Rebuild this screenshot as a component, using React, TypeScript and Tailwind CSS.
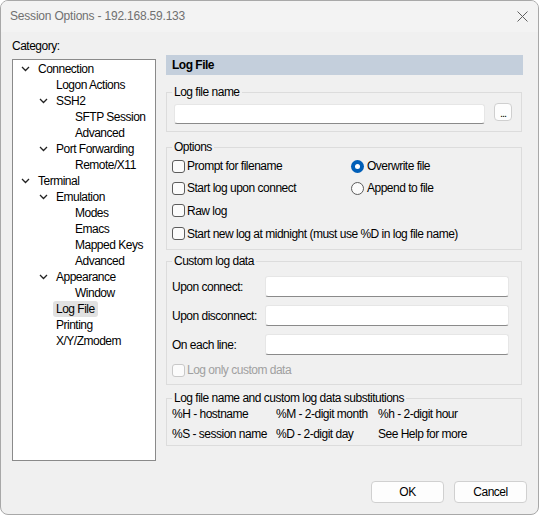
import React from 'react';

type Node = { label: string; level: number; open?: boolean; selected?: boolean };

const tree: Node[] = [
    { label: 'Connection', level: 0, open: true },
    { label: 'Logon Actions', level: 1 },
    { label: 'SSH2', level: 1, open: true },
    { label: 'SFTP Session', level: 2 },
    { label: 'Advanced', level: 2 },
    { label: 'Port Forwarding', level: 1, open: true },
    { label: 'Remote/X11', level: 2 },
    { label: 'Terminal', level: 0, open: true },
    { label: 'Emulation', level: 1, open: true },
    { label: 'Modes', level: 2 },
    { label: 'Emacs', level: 2 },
    { label: 'Mapped Keys', level: 2 },
    { label: 'Advanced', level: 2 },
    { label: 'Appearance', level: 1, open: true },
    { label: 'Window', level: 2 },
    { label: 'Log File', level: 1, selected: true },
    { label: 'Printing', level: 1 },
    { label: 'X/Y/Zmodem', level: 1 },
];

// chevron starts here; label starts 17px further right
const indent = ['pl-[8px]', 'pl-[26px]', 'pl-[45px]'];

const Chevron = () => (
    <svg width="9" height="6" viewBox="0 0 9 6" className="block">
        <path d="M1 1L4.5 4.5L8 1" fill="none" stroke="#222" strokeWidth="1.3" />
    </svg>
);

const Checkbox = ({ label, disabled }: { label: string; disabled?: boolean }) => (
    <label className={`flex items-center gap-[2px] ${disabled ? 'text-[#a0a0a0]' : ''}`}>
        <span
            className={`w-[13px] h-[13px] rounded-[3px] border bg-[#fbfbfb] ${disabled ? 'border-[#c8c8c8]' : 'border-[#5c5c5c]'}`}
        />
        {label}
    </label>
);

const Radio = ({ label, checked }: { label: string; checked?: boolean }) => (
    <label className="flex items-center gap-[3px]">
        {checked ? (
            <span className="w-[13px] h-[13px] rounded-full bg-[#005fb8] flex items-center justify-center">
                <span className="w-[5px] h-[5px] rounded-full bg-white" />
            </span>
        ) : (
            <span className="w-[13px] h-[13px] rounded-full border border-[#5c5c5c] bg-[#fbfbfb]" />
        )}
        {label}
    </label>
);

const TextBox = ({ className }: { className: string }) => (
    <div className={`bg-white border border-[#e6e6e6] border-b-[#8a8a8a] rounded-[3px] ${className}`} />
);

const App = () => {
    return (
        <div className="w-[539px] h-[515px] bg-[#f0f0f0] border border-[#a8a8a8] rounded-[8px] overflow-hidden flex flex-col text-[12px] leading-[16px] tracking-[-0.5px] text-black font-['Segoe_UI','Liberation_Sans',sans-serif]">
            {/* title bar */}
            <div className="h-[31px] bg-[#f3f3f3] flex items-center justify-between pl-[9px] pr-[10px] shrink-0">
                <span className="text-[#707070] pb-[1px] tracking-[-0.2px]">Session Options - 192.168.59.133</span>
                <svg width="11" height="11" viewBox="0 0 11 11">
                    <path d="M0.5 0.5L10.5 10.5M10.5 0.5L0.5 10.5" stroke="#606060" strokeWidth="1" />
                </svg>
            </div>

            <div className="flex pl-[11px]">
                {/* category tree */}
                <div className="w-[144px] pt-[6px]">
                    <div className="h-[16px]">Category:</div>
                    <div className="mt-[5px] h-[402px] bg-white border border-[#8a8a8a] pt-[1px]">
                        {tree.map((node, i) => (
                            <div key={i} className={`h-[16px] flex items-center ${indent[node.level]}`}>
                                <span className="w-[17px] shrink-0">{node.open && <Chevron />}</span>
                                {node.selected ? (
                                    <span className="-ml-[3px] px-[3px] h-[16px] bg-[#e1e1e1] rounded-[3px]">{node.label}</span>
                                ) : (
                                    <span>{node.label}</span>
                                )}
                            </div>
                        ))}
                    </div>
                </div>

                {/* page */}
                <div className="ml-[10px] w-[357px] pt-[23px]">
                    <div className="h-[20px] bg-[#c4cfdc] font-bold flex items-center pl-[6px]">Log File</div>

                    <fieldset className="mt-[9px] w-[356px] border border-[#dcdcdc] px-[5px] pt-[4px] pb-[7px]">
                        <legend className="px-[2px] h-[16px]">Log file name</legend>
                        <div className="flex items-start ml-[2px]">
                            <TextBox className="w-[311px] h-[20px]" />
                            <div className="ml-[9px] -mt-[1px] w-[18px] h-[18px] rounded-[4px] border border-[#cfcfcf] bg-[#fdfdfd] flex items-end justify-center text-[11px] leading-[13px] tracking-[-1px]">
                                ...
                            </div>
                        </div>
                    </fieldset>

                    <fieldset className="mt-[7px] w-[356px] border border-[#dcdcdc] px-[5px] pb-[4px]">
                        <legend className="px-[2px] h-[16px]">Options</legend>
                        <div className="grid grid-cols-[179px_1fr]">
                            <div className="h-[22px] flex items-center"><Checkbox label="Prompt for filename" /></div>
                            <div className="h-[22px] flex items-center"><Radio label="Overwrite file" checked /></div>
                            <div className="h-[22px] flex items-center"><Checkbox label="Start log upon connect" /></div>
                            <div className="h-[22px] flex items-center"><Radio label="Append to file" /></div>
                            <div className="h-[23px] flex items-center col-span-2"><Checkbox label="Raw log" /></div>
                            <div className="h-[23px] flex items-center col-span-2">
                                <Checkbox label="Start new log at midnight (must use %D in log file name)" />
                            </div>
                        </div>
                    </fieldset>

                    <fieldset className="mt-[3px] w-[356px] border border-[#dcdcdc] px-[5px] pt-[7px] pb-[5px]">
                        <legend className="px-[2px] h-[16px]">Custom log data</legend>
                        <div className="flex flex-col gap-[8px]">
                            {['Upon connect:', 'Upon disconnect:', 'On each line:'].map((l) => (
                                <div key={l} className="flex items-center">
                                    <span className="w-[93px] shrink-0">{l}</span>
                                    <TextBox className="w-[244px] h-[21px]" />
                                </div>
                            ))}
                        </div>
                        <div className="mt-[6px] h-[18px] flex items-center">
                            <Checkbox label="Log only custom data" disabled />
                        </div>
                    </fieldset>

                    <fieldset className="mt-[5px] w-[356px] border border-[#dcdcdc] px-[5px] pb-[3px]">
                        <legend className="px-[2px] h-[16px]">Log file name and custom log data substitutions</legend>
                        <div className="grid grid-cols-[104px_102px_1fr] gap-y-[4px]">
                            <span>%H - hostname</span>
                            <span>%M - 2-digit month</span>
                            <span>%h - 2-digit hour</span>
                            <span>%S - session name</span>
                            <span>%D - 2-digit day</span>
                            <span>See Help for more</span>
                        </div>
                    </fieldset>
                </div>
            </div>

            {/* buttons */}
            <div className="mt-[20px] flex justify-end gap-[10px] pr-[11px]">
                <button className="w-[73px] h-[22px] rounded-[4px] border border-[#d0d0d0] bg-[#fdfdfd]">OK</button>
                <button className="w-[73px] h-[22px] rounded-[4px] border border-[#d0d0d0] bg-[#fdfdfd]">Cancel</button>
            </div>
        </div>
    );
};

export default App;
